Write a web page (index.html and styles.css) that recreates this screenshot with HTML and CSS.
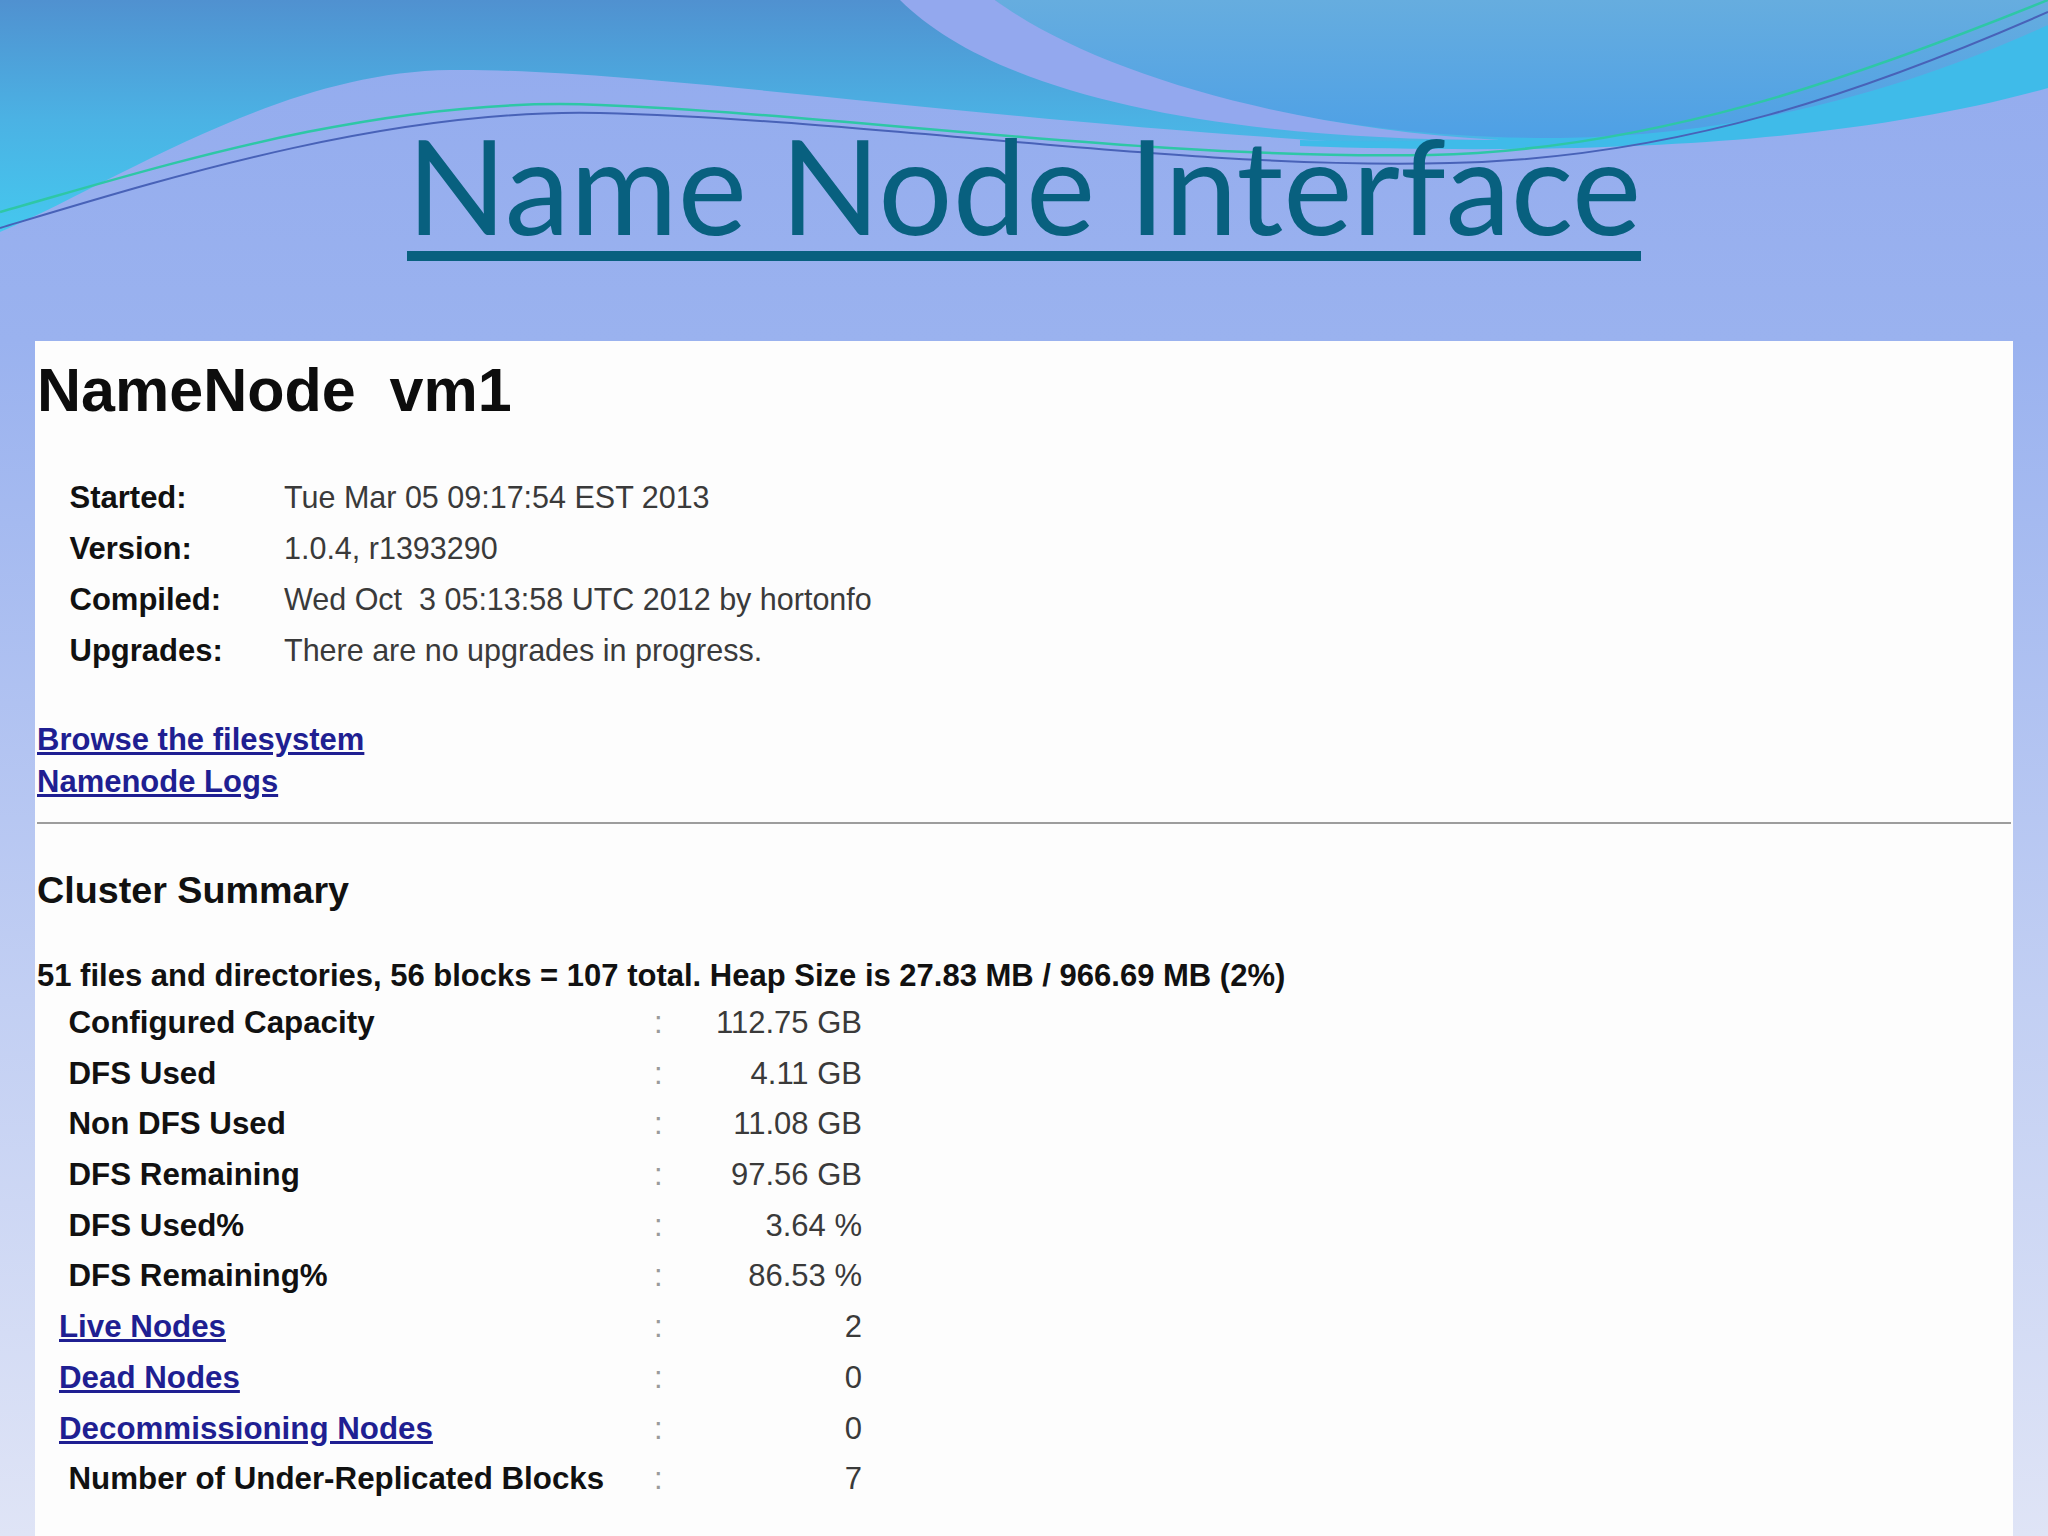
FILE: index.html
```html
<!DOCTYPE html>
<html lang="en">
<head>
<meta charset="utf-8">
<title>Name Node Interface</title>
<link rel="stylesheet" href="styles.css">
</head>
<body>
<svg class="waves" viewBox="0 0 2048 345" width="2048" height="345" aria-hidden="true">
  <defs>
    <linearGradient id="gTop" x1="0" y1="0" x2="0" y2="240" gradientUnits="userSpaceOnUse">
      <stop offset="0" stop-color="#5091d0"/>
      <stop offset="0.5" stop-color="#4bb2e4"/>
      <stop offset="1" stop-color="#44c9ef"/>
    </linearGradient>
    <linearGradient id="gTR" x1="0" y1="0" x2="0" y2="150" gradientUnits="userSpaceOnUse">
      <stop offset="0" stop-color="#66addf"/>
      <stop offset="1" stop-color="#4c9fe6"/>
    </linearGradient>
  </defs>
  <path d="M0 0 L2048 0 L2048 85 C1850 140 1600 155 1400 145 C1000 125 650 68 450 70 C280 72 120 180 0 232 Z" fill="url(#gTop)"/>
  <path d="M1300 140 C1600 150 1850 100 2048 20 L2048 88 C1880 135 1650 158 1300 146 Z" fill="#3fbbe9"/>
  <path d="M995 0 C1080 70 1300 140 1560 138 C1780 135 1950 70 2048 25 L2048 0 Z" fill="url(#gTR)"/>
  <path d="M900 0 C990 90 1200 140 1500 140 C1280 128 1090 70 995 0 Z" fill="#93a8ee"/>
  <path d="M0 212 C150 170 380 95 600 105 C850 115 1150 160 1430 155 C1650 150 1850 80 2048 0" fill="none" stroke="#2ec7a6" stroke-width="2.5"/>
  <path d="M0 228 C160 180 390 108 600 113 C880 120 1180 170 1450 163 C1680 158 1870 90 2048 12" fill="none" stroke="#4862b8" stroke-width="2"/>
</svg>

<header class="slide-head">
  <h1 class="slide-title">Name Node Interface</h1>
</header>

<main class="panel">
  <h1 class="nn-title">NameNode  vm1</h1>

  <div class="info">
    <span class="info-key">Started:</span><span class="info-val">Tue Mar 05 09:17:54 EST 2013</span>
    <span class="info-key">Version:</span><span class="info-val">1.0.4, r1393290</span>
    <span class="info-key">Compiled:</span><span class="info-val">Wed Oct  3 05:13:58 UTC 2012 by hortonfo</span>
    <span class="info-key">Upgrades:</span><span class="info-val">There are no upgrades in progress.</span>
  </div>

  <div class="links">
    <a href="#">Browse the filesystem</a>
    <a href="#">Namenode Logs</a>
  </div>

  <hr class="rule">

  <h2 class="cluster-title">Cluster Summary</h2>
  <p class="summary">51 files and directories, 56 blocks = 107 total. Heap Size is 27.83 MB / 966.69 MB (2%)</p>

  <div class="stats">
    <span class="stat-key plain">Configured Capacity</span><span class="stat-sep">:</span><span class="stat-val">112.75 GB</span>
    <span class="stat-key plain">DFS Used</span><span class="stat-sep">:</span><span class="stat-val">4.11 GB</span>
    <span class="stat-key plain">Non DFS Used</span><span class="stat-sep">:</span><span class="stat-val">11.08 GB</span>
    <span class="stat-key plain">DFS Remaining</span><span class="stat-sep">:</span><span class="stat-val">97.56 GB</span>
    <span class="stat-key plain">DFS Used%</span><span class="stat-sep">:</span><span class="stat-val">3.64 %</span>
    <span class="stat-key plain">DFS Remaining%</span><span class="stat-sep">:</span><span class="stat-val">86.53 %</span>
    <span class="stat-key"><a href="#">Live Nodes</a></span><span class="stat-sep">:</span><span class="stat-val">2</span>
    <span class="stat-key"><a href="#">Dead Nodes</a></span><span class="stat-sep">:</span><span class="stat-val">0</span>
    <span class="stat-key"><a href="#">Decommissioning Nodes</a></span><span class="stat-sep">:</span><span class="stat-val">0</span>
    <span class="stat-key plain">Number of Under-Replicated Blocks</span><span class="stat-sep">:</span><span class="stat-val">7</span>
  </div>
</main>
</body>
</html>
```

FILE: styles.css
```css
html, body {
  margin: 0;
  padding: 0;
}

body {
  width: 2048px;
  height: 1536px;
  overflow: hidden;
  position: relative;
  background: linear-gradient(to bottom, #93abee 0px, #9ab2ef 340px, #c2cff3 1000px, #dfe4f6 1536px);
  font-family: "Liberation Sans", Arial, sans-serif;
}

.waves {
  position: absolute;
  left: 0;
  top: 0;
  z-index: 0;
}

.slide-head {
  position: relative;
  z-index: 1;
  height: 341px;
  box-sizing: border-box;
  padding-top: 118.8px;
}

.slide-title {
  display: block;
  width: fit-content;
  margin: 0 auto;
  font-family: Lato, "Open Sans", sans-serif;
  font-weight: 400;
  font-size: 131px;
  line-height: 131px;
  color: #08607f;
  border-bottom: 10px solid #08607f;
  padding-bottom: 1.5px;
}

.panel {
  position: relative;
  z-index: 1;
  display: block;
  margin-left: 35px;
  width: 1978px;
  height: 1195px;
  box-sizing: border-box;
  padding: 12.5px 2px 0;
  background: #fdfdfd;
  overflow: hidden;
}

.nn-title {
  margin: 0;
  font-size: 61px;
  line-height: 72px;
  font-weight: 700;
  color: #0d0d0d;
  white-space: pre;
}

.info {
  margin: 46.4px 0 0 32.5px;
  display: grid;
  grid-template-columns: 214.5px auto;
  font-size: 31px;
  line-height: 51px;
}

.info-key {
  font-weight: 700;
  color: #111;
}

.info-val {
  font-size: 30.5px;
  color: #3a3a3a;
  white-space: pre;
}

.links {
  margin-top: 43px;
  display: flex;
  flex-direction: column;
  align-items: flex-start;
  font-size: 31px;
  line-height: 42px;
  font-weight: 700;
}

a {
  color: #1f1f92;
  text-decoration: underline;
}

.rule {
  margin: 19px 0 0;
  border: 0;
  height: 2px;
  background: #9d9d9d;
}

.cluster-title {
  margin: 44px 0 0;
  font-size: 37.7px;
  line-height: 44px;
  font-weight: 700;
  color: #111;
}

.summary {
  margin: 43px 0 0;
  font-size: 31px;
  line-height: 42px;
  font-weight: 700;
  color: #111;
}

.stats {
  margin: 1px 0 0 22px;
  display: grid;
  grid-template-columns: 595px 12px 196px;
  font-size: 31px;
  line-height: 50.7px;
}

.stat-key {
  font-size: 31.3px;
  font-weight: 700;
  color: #111;
}

.stat-key.plain {
  padding-left: 9.5px;
}

.stat-sep {
  color: #9a9a9a;
}

.stat-val {
  text-align: right;
  color: #3a3a3a;
}
```
